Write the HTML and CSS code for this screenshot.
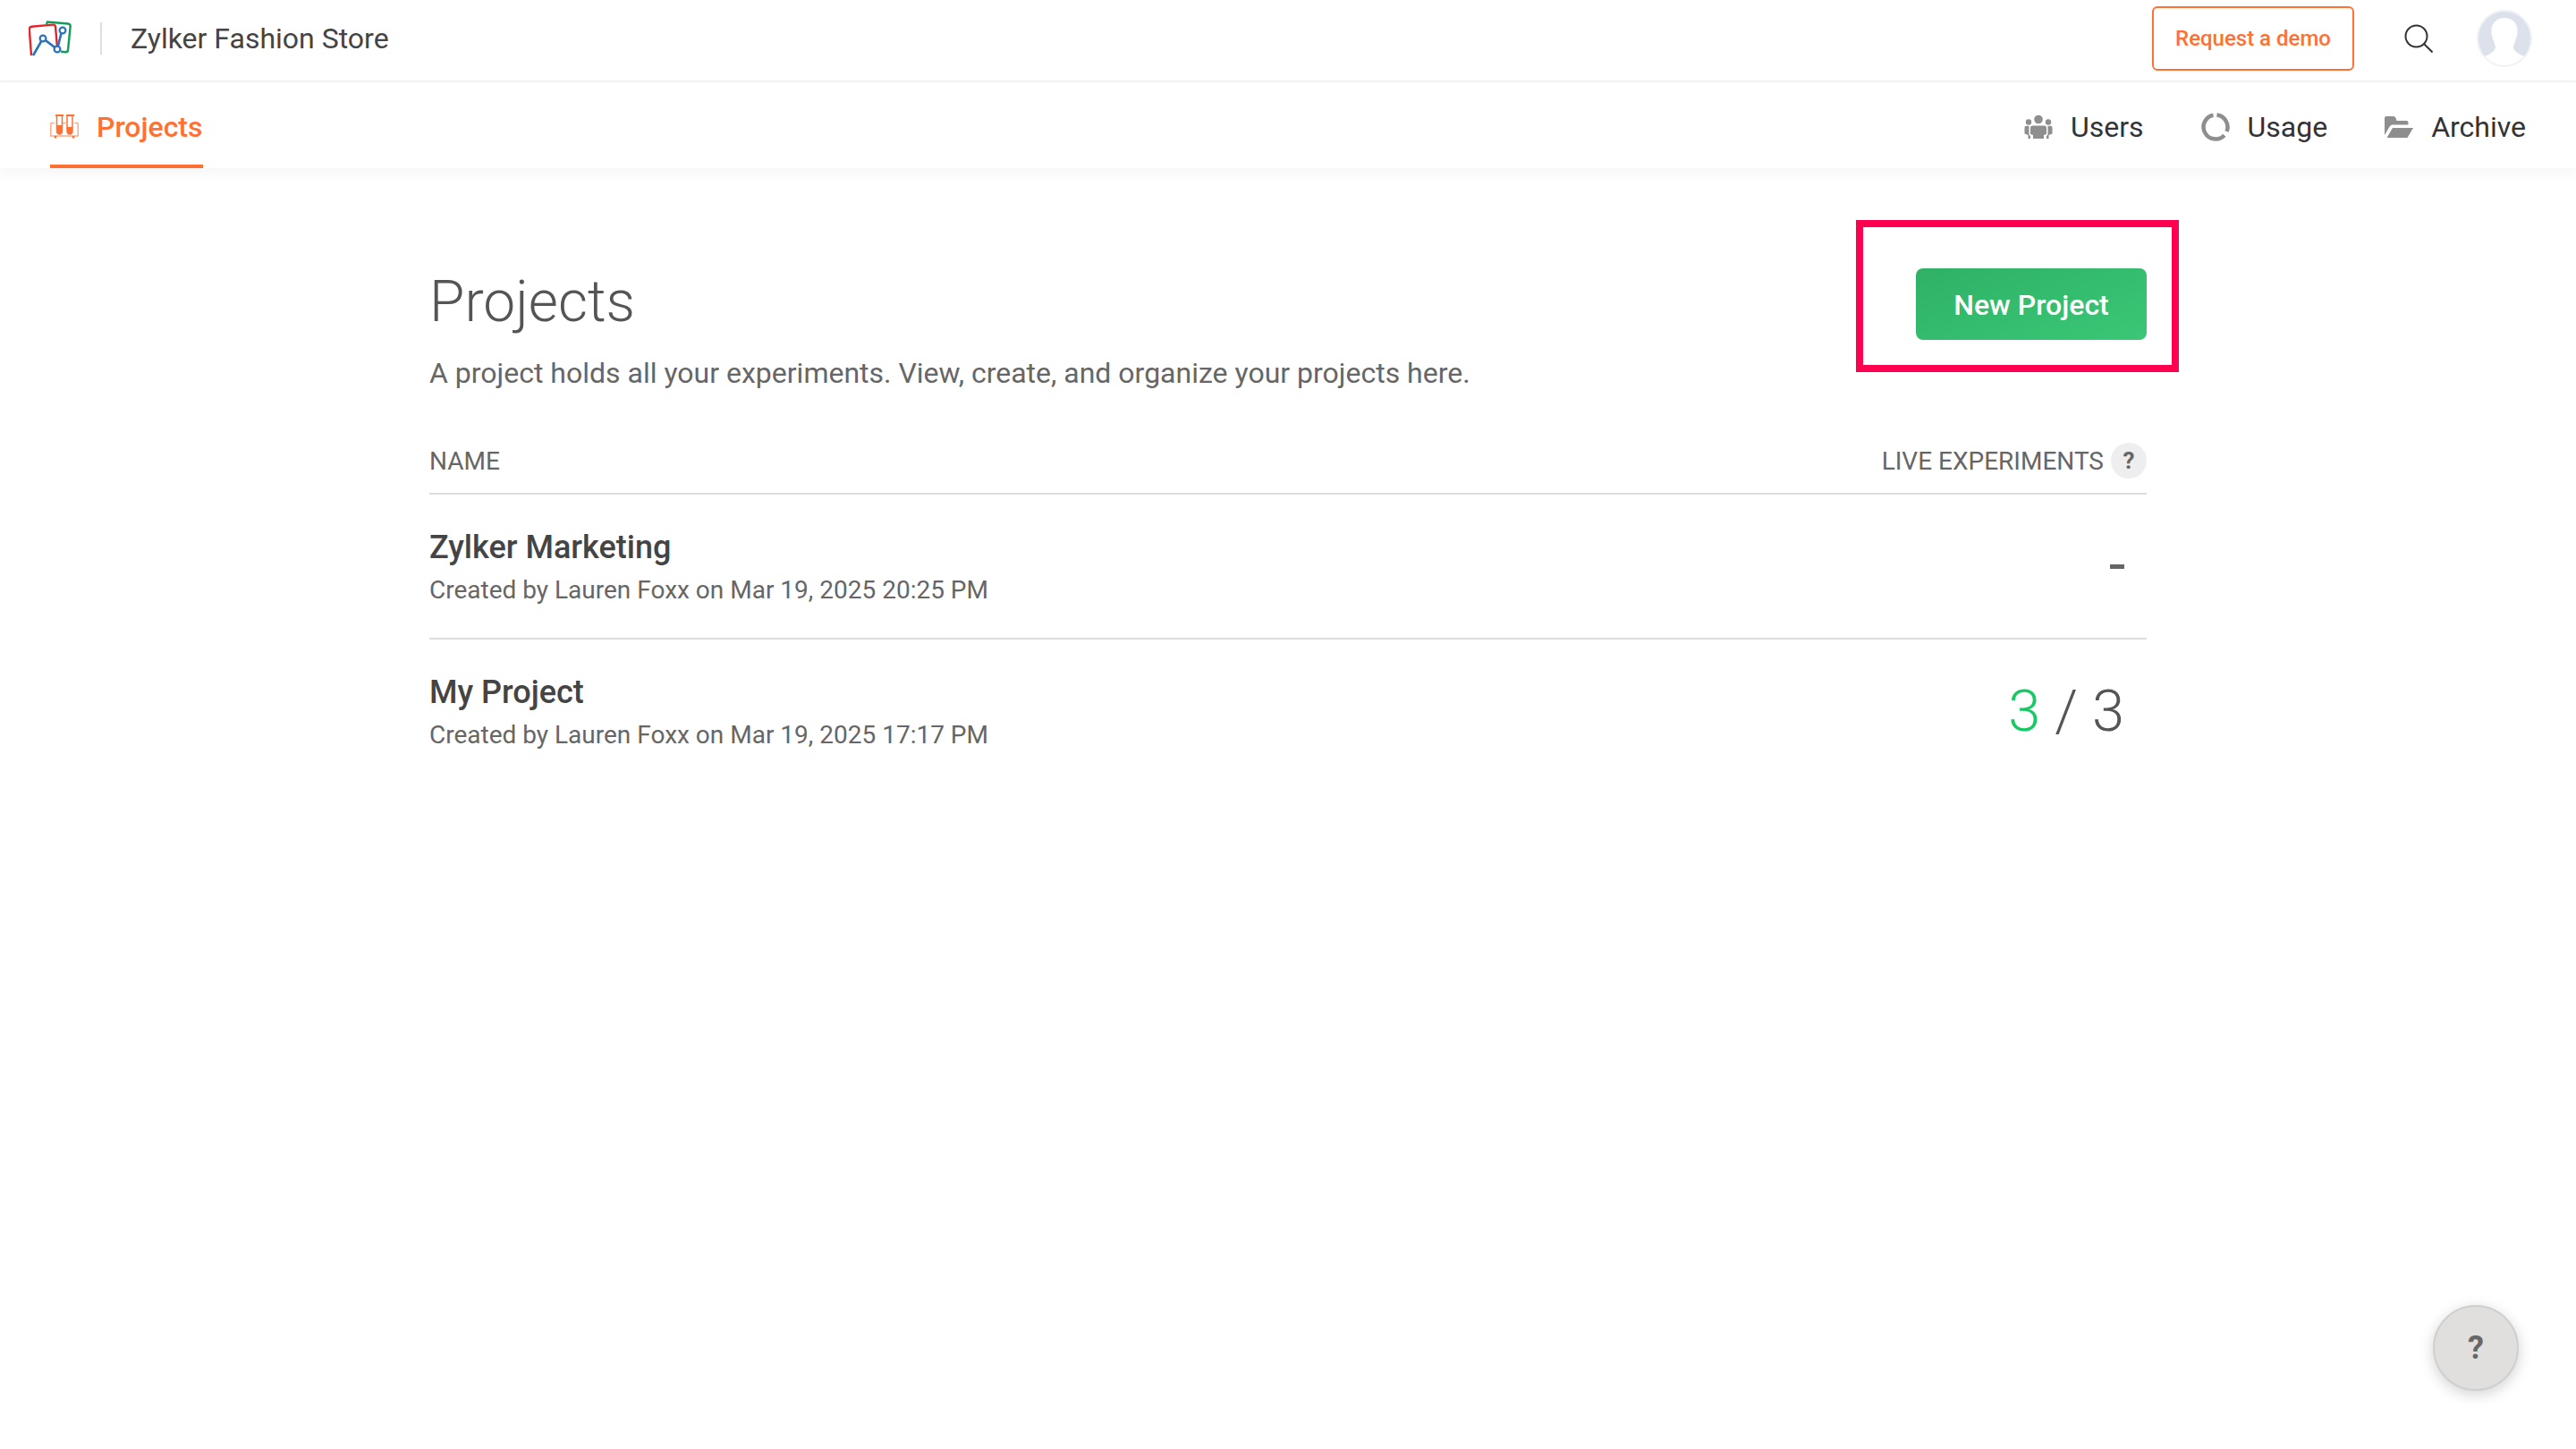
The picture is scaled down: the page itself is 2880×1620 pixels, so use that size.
FILE: index.html
```html
<!DOCTYPE html>
<html lang="en">
<head>
  <meta charset="UTF-8" />
  <title>Zylker Fashion Store - Projects</title>
  <link rel="stylesheet" href="styles.css">
</head>
<body>

  <header class="topbar">
    <svg class="logo" viewBox="0 0 48 40" fill="none">
      <path d="M20 4 L21 1.5 L44 3.5 Q47 4 46.6 7 L44 33 Q43.6 35.5 41 35.2 L36 34.6" stroke="#0f9d58" stroke-width="2.4"/>
      <path d="M3 39 L0.8 10 Q0.6 7.2 3.4 6.8 L27 4.6 Q29.8 4.4 30 7 L32 30" stroke="#e42527" stroke-width="2.4"/>
      <path d="M5 39 L16 20 L32 32 L37 12" stroke="#2a72ba" stroke-width="2.6"/>
      <circle cx="16" cy="20" r="3.4" fill="#fff" stroke="#2a72ba" stroke-width="2.2"/>
      <circle cx="32" cy="32" r="3.4" fill="#fff" stroke="#2a72ba" stroke-width="2.2"/>
      <circle cx="38" cy="11" r="3.4" fill="#fff" stroke="#2a72ba" stroke-width="2.2"/>
    </svg>
    <span class="divider"></span>
    <span class="store-name">Zylker Fashion Store</span>
    <a class="demo-btn">Request a demo</a>
    <svg class="search-icon" viewBox="0 0 32 32" fill="none" stroke="#333" stroke-width="2">
      <circle cx="13.5" cy="13.5" r="12"/>
      <path d="M22 22 L31.5 31.5"/>
    </svg>
    <svg class="avatar" viewBox="0 0 62 64">
      <clipPath id="avatar-clip"><ellipse cx="31" cy="32" rx="30" ry="31"/></clipPath>
      <ellipse cx="31" cy="32" rx="30" ry="31" fill="#dde1ec"/>
      <path clip-path="url(#avatar-clip)" d="M31 9 C40 9 46 15 45.500 25 C45 32 42 36 41 42 C42 47 47 49 53 52 L66 66 H-4 L9 52 C15 49 20 47 21 42 C20 36 17 32 16.500 25 C16 15 22 9 31 9 Z" fill="#fff"/>
      <ellipse cx="31" cy="32" rx="30" ry="31" fill="none" stroke="#f1f2f5" stroke-width="2"/>
    </svg>
  </header>

  <nav class="subnav">
    <a class="tab active">
      <svg class="tab-icon" viewBox="0 0 32 28" fill="none" stroke="#ff7033" stroke-width="1.5">
        <path d="M0.800 9.500 H5 M27 9.500 H31.200 M0.800 9.500 V24 H31.200 V9.500 M14 9.500 H17.500" opacity=".6"/>
        <path d="M6 1 H15 M18 1 H27" stroke-width="2"/>
        <path d="M7.500 1 V18 Q7.500 22 10.500 22 Q13.500 22 13.500 18 V1 M19 1 V18 Q19 22 22 22 Q25 22 25 18 V1"/>
        <path d="M7.500 12 H13.500 V18 Q13.500 22 10.500 22 Q7.500 22 7.500 18 Z M19 14 H25 V18 Q25 22 22 22 Q19 22 19 18 Z" fill="#ff7033" stroke="none"/>
        <path d="M6 24 V26.500 M26 24 V26.500" stroke-width="2.500"/>
      </svg>
      <span>Projects</span>
    </a>
    <div class="subnav-right">
      <a class="tab">
        <svg class="tab-icon" viewBox="0 0 32 28" fill="#8e8e8e">
          <circle cx="16" cy="5.500" r="4.800"/>
          <circle cx="5" cy="8.500" r="3.200"/>
          <circle cx="27" cy="8.500" r="3.200"/>
          <path d="M9 12.500 H23 Q25 12.500 25 15 V22 L22 23 V27 H10 V23 L7 22 V15 Q7 12.500 9 12.500 Z"/>
          <path d="M0.500 14.500 Q0.500 12.800 2.500 12.800 H5.500 V22.500 L7 24 V27 H4.500 V23 L0.500 21.500 Z M31.500 14.500 Q31.500 12.800 29.500 12.800 H26.500 V22.500 L25 24 V27 H27.500 V23 L31.500 21.500 Z"/>
        </svg>
        <span>Users</span>
      </a>
      <a class="tab">
        <svg class="tab-icon usage-icon" viewBox="0 0 32 32" fill="none" stroke="#8e8e8e" stroke-width="4.500">
          <path d="M17.500 2.600 A13.500 13.500 0 0 1 28.500 21"/>
          <path d="M25.900 25.200 A13.500 13.500 0 1 1 13.500 2.700"/>
        </svg>
        <span>Usage</span>
      </a>
      <a class="tab">
        <svg class="tab-icon" viewBox="0 0 32 28" fill="#8e8e8e">
          <path d="M0 4 Q0 2 2 2 H10 Q11.500 2 12.500 4 L13.500 7 H24.500 Q26.500 7 26.500 9 V11.500 H8.500 Q7 11.500 6 13 L0 23 Z"/>
          <path d="M9 15 H32 L25.500 26 H2.500 Z"/>
        </svg>
        <span>Archive</span>
      </a>
    </div>
  </nav>

  <main class="content">
    <div class="page-head">
      <div>
        <h1 class="page-title">Projects</h1>
        <p class="page-desc">A project holds all your experiments. View, create, and organize your projects here.</p>
      </div>
      <a class="new-btn">New Project</a>
    </div>

    <div class="list-head">
      <span>NAME</span>
      <span class="live-head">LIVE EXPERIMENTS <i class="q-badge">?</i></span>
    </div>

    <div class="row">
      <div class="row-text">
        <div class="row-name">Zylker Marketing</div>
        <div class="row-meta">Created by Lauren Foxx on Mar 19, 2025 20:25 PM</div>
      </div>
      <div class="row-none"></div>
    </div>
    <div class="row">
      <div class="row-text">
        <div class="row-name">My Project</div>
        <div class="row-meta">Created by Lauren Foxx on Mar 19, 2025 17:17 PM</div>
      </div>
      <div class="row-count"><span class="live">3</span> / 3</div>
    </div>
  </main>

  <div class="highlight"></div>
  <a class="help-btn">?</a>

</body>
</html>
```

FILE: styles.css
```css
* {
  box-sizing: border-box;
}
body {
  margin: 0;
  min-height: 100vh;
  background: #fff;
  font-family: 'Roboto', sans-serif;
  color: #444;
  position: relative;
  overflow: hidden;
}
.topbar {
  height: 92px;
  display: flex;
  align-items: center;
  padding: 0 49px 4px 32px;
  border-bottom: 2px solid #f2f2f2;
}
.logo {
  width: 48px;
  height: 40px;
}
.divider {
  width: 2px;
  height: 36px;
  margin-left: 32px;
  background: #dedede;
}
.store-name {
  margin-left: 32px;
  font-size: 32px;
  color: #444;
}
.demo-btn {
  margin-left: auto;
  width: 226px;
  height: 72px;
  display: flex;
  align-items: center;
  justify-content: center;
  border: 2px solid #ff7033;
  border-radius: 6px;
  color: #ff7033;
  font-size: 24px;
  font-weight: 500;
}
.search-icon {
  width: 32px;
  height: 32px;
  margin-left: 56px;
}
.avatar {
  width: 62px;
  height: 64px;
  margin-left: 49px;
}
.subnav {
  height: 96px;
  display: flex;
  justify-content: space-between;
  padding: 0 56px;
  box-shadow: 0 6px 14px rgba(0,0,0,0.04);
}
.subnav-right {
  display: flex;
  gap: 64px;
}
.tab {
  display: flex;
  align-items: center;
  gap: 20px;
  height: 96px;
  padding-top: 4px;
  font-size: 32px;
  color: #333;
}
.tab.active {
  color: #ff7033;
  font-weight: 500;
  border-bottom: 4px solid #ff7033;
  padding-top: 8px;
}
.tab-icon {
  width: 32px;
  height: 28px;
}
.usage-icon {
  height: 32px;
}
.content {
  width: 1920px;
  margin: 0 auto;
}
.page-head {
  height: 293px;
  padding-top: 112px;
  display: flex;
  justify-content: space-between;
}
.page-title {
  margin: 0;
  font-size: 64px;
  font-weight: 300;
  line-height: 76px;
  color: #555;
}
.page-desc {
  margin: 20px 0 0;
  font-size: 32px;
  line-height: 42px;
  color: #666;
}
.new-btn {
  width: 258px;
  height: 80px;
  padding-top: 2px;
  display: flex;
  align-items: center;
  justify-content: center;
  background: linear-gradient(160deg, #2fb166, #3ac776);
  border-radius: 8px;
  color: #fff;
  font-size: 32px;
  font-weight: 500;
}
.list-head,
.row {
  display: flex;
  justify-content: space-between;
}
.list-head {
  height: 72px;
  align-items: center;
  padding-bottom: 2px;
  font-size: 28px;
  color: #666;
  border-bottom: 2px solid #ddd;
}
.live-head {
  display: flex;
  align-items: center;
  gap: 8px;
}
.q-badge {
  width: 40px;
  height: 40px;
  border-radius: 50%;
  background: #eee;
  display: flex;
  align-items: center;
  justify-content: center;
  font-style: normal;
  font-weight: 700;
  font-size: 26px;
  color: #666;
}
.row {
  height: 162px;
  align-items: center;
  border-bottom: 2px solid #ddd;
}
.row:last-child {
  border-bottom-color: transparent;
}
.row-text {
  padding-top: 5px;
}
.row-name {
  font-size: 36px;
  font-weight: 500;
  line-height: 44px;
  color: #444;
}
.row-meta {
  margin-top: 4px;
  font-size: 28px;
  line-height: 44px;
  color: #666;
}
.row-none {
  width: 16px;
  height: 5px;
  margin-right: 25px;
  background: #666;
}
.row-count {
  font-size: 65px;
  font-weight: 350;
  color: #555;
  margin-right: 25px;
}
.row-count .live {
  color: #17c964;
}
/* annotation drawn over the screenshot */
.highlight {
  position: absolute;
  left: 2075px;
  top: 246px;
  width: 361px;
  height: 170px;
  border: 8.5px solid #ff0050;
}
.help-btn {
  position: absolute;
  left: 2720px;
  top: 1459px;
  width: 96px;
  height: 96px;
  border-radius: 50%;
  background: #e0dfdd;
  border: 2px solid #cfcfcf;
  box-shadow: 0 4px 16px rgba(0,0,0,0.18);
  display: flex;
  align-items: center;
  justify-content: center;
  font-size: 36px;
  font-weight: 700;
  color: #666;
}
```
